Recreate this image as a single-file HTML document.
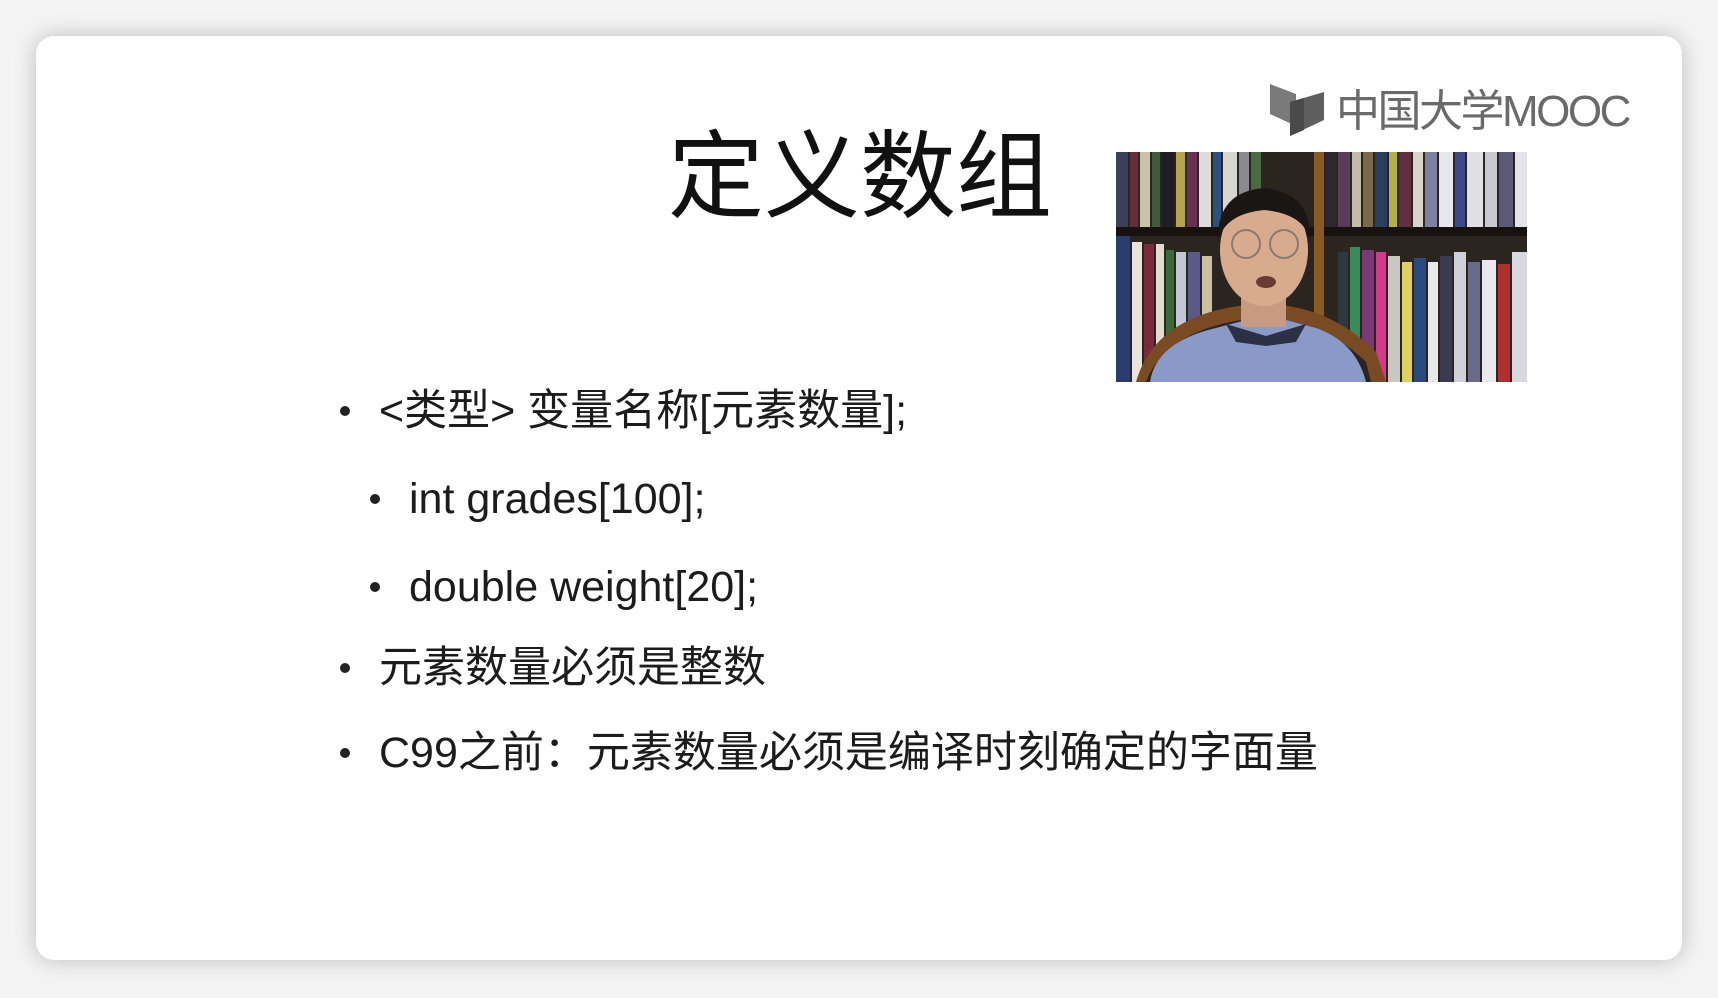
<!DOCTYPE html>
<html><head><meta charset="utf-8"><style>
html,body{margin:0;padding:0;width:1718px;height:998px;overflow:hidden;background:#f3f3f3;font-family:"Liberation Sans","Noto Sans CJK SC",sans-serif;}
.card{position:absolute;left:36px;top:36px;width:1646px;height:924px;background:#fff;border-radius:18px;box-shadow:0 0 22px rgba(0,0,0,0.22);}
.t{position:absolute;color:#1c1c1c;white-space:nowrap;}
.title{left:668px;top:123px;font-size:96px;line-height:110px;color:#111;}
.b{font-size:43px;line-height:50px;}
.dot{position:absolute;width:10px;height:10px;border-radius:50%;background:#222;}
.logo{position:absolute;left:1336px;top:85px;font-size:44px;line-height:54px;color:#6a6a6a;letter-spacing:-2.5px;}
.video{position:absolute;left:1116px;top:152px;width:411px;height:230px;overflow:hidden;background:#2a2622;}
</style></head><body>
<div class="card"></div>
<div class="t title">定义数组</div>

<svg style="position:absolute;left:1268px;top:84px" width="68" height="54" viewBox="0 0 68 54">
<polygon points="2,0 28,10 28,42 2,30" fill="#7a7a7a"/>
<polygon points="22,18 56,8 56,36 22,52" fill="#5e5e5e"/>
<polygon points="22,18 36,14 36,46 22,52" fill="#4a4a4a"/>
</svg>
<div class="logo">中国大学MOOC</div>

<div class="video">
<svg width="411" height="230" viewBox="0 0 411 230">
<rect width="411" height="230" fill="#2b2520"/>
<g>
<rect x="0" y="0" width="12" height="75" fill="#3a3f5a"/><rect x="14" y="0" width="8" height="75" fill="#6b2c3a"/><rect x="24" y="0" width="10" height="75" fill="#c9c4a8"/><rect x="36" y="0" width="8" height="75" fill="#3d5a3a"/><rect x="46" y="0" width="12" height="75" fill="#1e1e28"/><rect x="60" y="0" width="9" height="75" fill="#b7a44a"/><rect x="71" y="0" width="10" height="75" fill="#6a3050"/><rect x="83" y="0" width="12" height="75" fill="#dcdcd8"/><rect x="97" y="0" width="8" height="75" fill="#2a5080"/><rect x="107" y="0" width="14" height="75" fill="#d8d6d0"/><rect x="123" y="0" width="10" height="75" fill="#8a8a90"/><rect x="135" y="0" width="10" height="75" fill="#4a6a40"/>
<rect x="0" y="75" width="200" height="9" fill="#161210"/>
<rect x="0" y="84" width="14" height="146" fill="#2a3c70"/><rect x="16" y="90" width="10" height="140" fill="#e8e4dc"/><rect x="28" y="92" width="10" height="138" fill="#7a2a3a"/><rect x="40" y="92" width="8" height="138" fill="#e0dcd0"/><rect x="50" y="98" width="8" height="132" fill="#3a6a3a"/><rect x="60" y="100" width="10" height="130" fill="#c0c8d8"/><rect x="72" y="100" width="12" height="130" fill="#5a5a8a"/><rect x="86" y="104" width="10" height="126" fill="#c8c0a0"/>
<rect x="198" y="0" width="10" height="230" fill="#8a5a22"/>
<rect x="210" y="0" width="10" height="75" fill="#2a2a30"/><rect x="222" y="0" width="12" height="75" fill="#5a3a5a"/><rect x="236" y="0" width="9" height="75" fill="#c0bca8"/><rect x="247" y="0" width="10" height="75" fill="#7a6a4a"/><rect x="259" y="0" width="12" height="75" fill="#2c3e60"/><rect x="273" y="0" width="8" height="75" fill="#b8b040"/><rect x="283" y="0" width="12" height="75" fill="#603040"/><rect x="297" y="0" width="10" height="75" fill="#d8d4cc"/><rect x="309" y="0" width="12" height="75" fill="#8080a0"/><rect x="323" y="0" width="14" height="75" fill="#e8e8ec"/><rect x="339" y="0" width="10" height="75" fill="#3a4a8a"/><rect x="351" y="0" width="16" height="75" fill="#e0e0e4"/><rect x="369" y="0" width="12" height="75" fill="#c8c8d0"/><rect x="383" y="0" width="14" height="75" fill="#5a5a78"/><rect x="399" y="0" width="12" height="75" fill="#e4e4e8"/>
<rect x="208" y="75" width="203" height="9" fill="#161210"/>
<rect x="222" y="100" width="10" height="130" fill="#2a3a40"/><rect x="234" y="95" width="10" height="135" fill="#3a8a5a"/><rect x="246" y="98" width="12" height="132" fill="#7a3a7a"/><rect x="260" y="100" width="10" height="130" fill="#d43a8a"/><rect x="272" y="104" width="12" height="126" fill="#c8c8c0"/><rect x="286" y="110" width="10" height="120" fill="#e0d060"/><rect x="298" y="106" width="12" height="124" fill="#2a4a80"/><rect x="312" y="110" width="10" height="120" fill="#e8e8e8"/><rect x="324" y="104" width="12" height="126" fill="#3a3a50"/><rect x="338" y="100" width="12" height="130" fill="#d0d0d8"/><rect x="352" y="110" width="12" height="120" fill="#6a6a8a"/><rect x="366" y="108" width="14" height="122" fill="#e8e8ee"/><rect x="382" y="112" width="12" height="118" fill="#b03030"/><rect x="396" y="100" width="15" height="130" fill="#d8d8de"/>
</g>
<path d="M20 230 Q40 160 140 152 Q210 150 260 200 L270 230Z" fill="#7a4a22"/>
<path d="M30 230 Q50 176 140 166 Q205 166 250 210 L255 230Z" fill="#2a2520"/>
<path d="M34 230 Q40 190 100 176 L130 168 L170 168 L200 176 Q240 190 250 230Z" fill="#8a9ac8"/>
<path d="M110 172 L150 184 L190 172 L180 190 L150 194 L120 190Z" fill="#2c3044"/>
<rect x="125" y="140" width="45" height="35" fill="#c89a80"/>
<ellipse cx="148" cy="98" rx="44" ry="56" fill="#d8aa8e"/>
<path d="M102 90 Q100 40 148 36 Q196 40 194 90 Q190 62 148 58 Q108 62 102 90Z" fill="#1a1614"/>
<circle cx="130" cy="92" r="14" fill="none" stroke="#8a7a70" stroke-width="2"/>
<circle cx="168" cy="92" r="14" fill="none" stroke="#8a7a70" stroke-width="2"/>
<ellipse cx="150" cy="130" rx="10" ry="6" fill="#6a3a34"/>
</svg>
</div>

<div class="dot" style="left:340px;top:406px"></div>
<div class="t b" style="left:379px;top:386px">&lt;类型&gt; 变量名称[元素数量];</div>
<div class="dot" style="left:370px;top:494px"></div>
<div class="t b" style="left:409px;top:474px">int grades[100];</div>
<div class="dot" style="left:370px;top:582px"></div>
<div class="t b" style="left:409px;top:562px">double weight[20];</div>
<div class="dot" style="left:340px;top:663px"></div>
<div class="t b" style="left:379px;top:643px">元素数量必须是整数</div>
<div class="dot" style="left:340px;top:748px"></div>
<div class="t b" style="left:379px;top:728px">C99之前：元素数量必须是编译时刻确定的字面量</div>
</body></html>
